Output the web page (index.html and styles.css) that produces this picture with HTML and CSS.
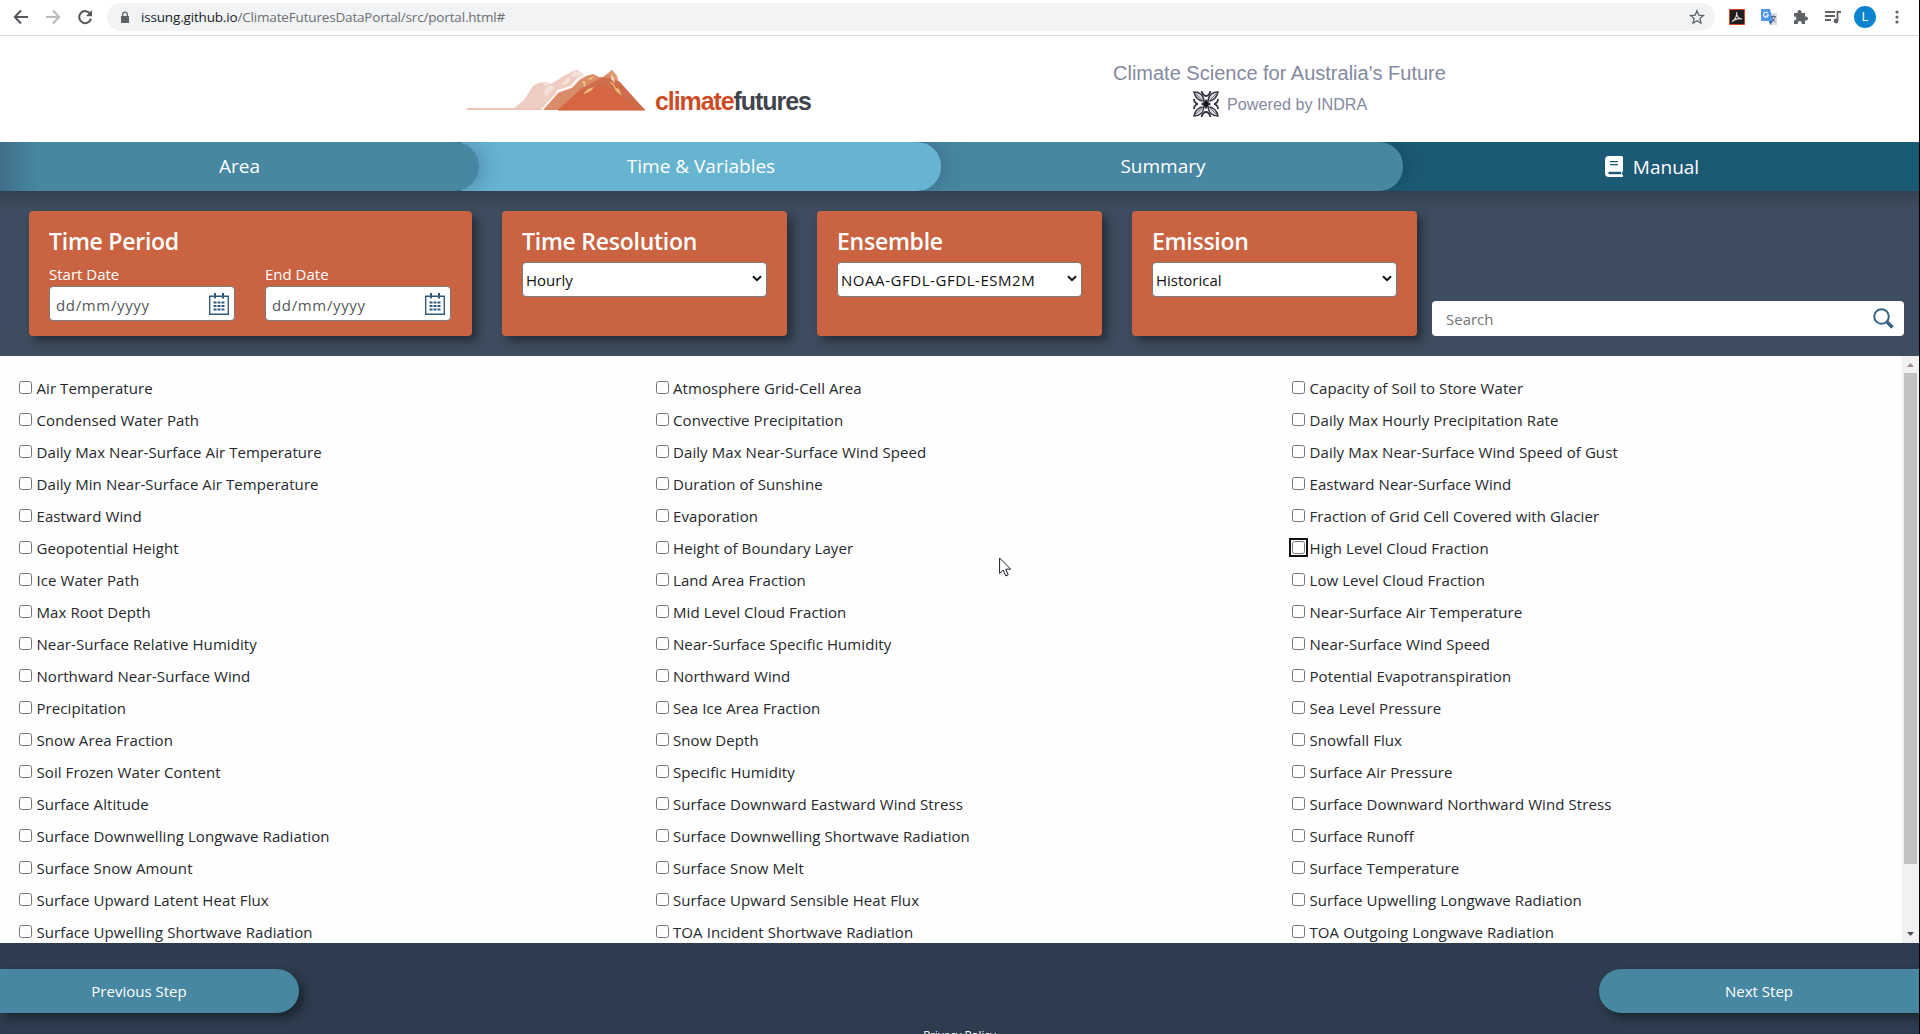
FILE: index.html
```html
<!DOCTYPE html>
<html lang="en">
<head>
<meta charset="utf-8">
<title>Climate Futures Data Portal</title>
<link rel="stylesheet" href="styles.css">
</head>
<body>
<div class="window">
  <div class="chrome">
    <div class="nav-icons">
      <svg width="16" height="16" viewBox="0 0 16 16" class="stroke"><path d="M15 8H2M8 1.500 1.800 8 8 14.500"/></svg>
      <svg width="16" height="16" viewBox="0 0 16 16" class="stroke faded"><path d="M1 8h13M8 1.500 14.200 8 8 14.500"/></svg>
      <svg width="16" height="16" viewBox="0 0 16 16" class="stroke"><path d="M13.300 5A6 6 0 1 0 14 9.500"/><path class="solid" d="M15 1v6.200H8.800z"/></svg>
    </div>
    <div class="address">
      <svg width="10" height="13" viewBox="0 0 10 13"><path d="M1 5h8v7H1z" fill="#5f6368"/><path d="M2.700 5V3.500a2.300 2.300 0 0 1 4.600 0V5" fill="none" stroke="#5f6368" stroke-width="1.300"/></svg>
      <span class="url"><b>issung.github.io</b>/ClimateFuturesDataPortal/src/portal.html#</span>
      <svg class="star" width="16" height="16" viewBox="0 0 16 16"><path d="m8 1.800 1.800 4.300 4.700.4-3.600 3.100 1.100 4.500L8 11.700l-4 2.400 1.100-4.500L1.500 6.500l4.700-.4z" fill="none" stroke="#5f6368" stroke-width="1.300"/></svg>
    </div>
    <div class="extensions">
      <svg width="16" height="16" viewBox="0 0 16 16"><path d="M.5.500h15v15H.5z" fill="#211c1e" stroke="#d5441f"/><path d="M3 12.500c3-1.500 5.500-6 4.700-9.500C7 7 10 10 13 10c-3-.8-7-.2-10 2.500z" fill="none" stroke="#eadfdf" stroke-width="1.100"/></svg>
      <svg width="16" height="16" viewBox="0 0 16 16"><path d="M6 4h10v12H9z" fill="#dcdcdc"/><path d="M0 0h9l3 12H1a1 1 0 0 1-1-1z" fill="#4f97ea"/><path d="m8 12 4 0-3 4z" fill="#2f62b5"/><path d="M6.800 4.200A2.400 2.400 0 1 0 7.300 6H5.200" fill="none" stroke="#fff" stroke-width="1.100"/><path d="M10 7.500h5M12.500 6.500v1M11 8c.5 2 2 4 3.500 5M14 8c-.5 2-2 4-3 5" fill="none" stroke="#56657c"/></svg>
      <svg width="16" height="16" viewBox="0 0 16 16"><path d="M1 4h3.500V3a2 2 0 0 1 4 0v1H12v3.500h1a2 2 0 0 1 0 4h-1V15H8.700v-1a1.900 1.900 0 0 0-3.800 0v1H1v-3.800h1a1.900 1.900 0 0 0 0-3.700H1z" fill="#5f6368"/></svg>
      <svg width="16" height="16" viewBox="0 0 16 16"><path d="M0 3h10M0 7h10M0 11h6M12.500 12V3H16" fill="none" stroke="#5f6368" stroke-width="1.800"/><circle cx="11" cy="12" r="2.400" fill="#5f6368"/></svg>
      <span class="avatar">L</span>
      <svg width="4" height="16" viewBox="0 0 4 16" fill="#5f6368"><circle cx="2" cy="3" r="1.600"/><circle cx="2" cy="8" r="1.600"/><circle cx="2" cy="13" r="1.600"/></svg>
    </div>
  </div>

  <header class="header">
    <div class="brand">
      <svg width="179" height="41" viewBox="0 0 179 41">
        <path d="M0 38h47l10-8 9-14 5-3 7-1 6 2 11-7 11-6 4-1 6 4 1 6-12 14-28 15H0z" fill="#efcdc3"/>
        <path d="M0 39.200h76" stroke="#f0c2b2" stroke-width="1.500"/>
        <path d="m103 5 5-4 6 2 1 2-8 2zM77 21l5-6 5 2-2 4-7 6zM95 13l6-5 3 1-3 4-5 2zM76 13l5-1 2 2-5 2z" fill="#f6e1d9"/>
        <path d="m75 40 9-10 5-5 2-4 13-4 7-8 5-3" stroke="#fffdf6" stroke-width="2" fill="none"/>
        <path d="m76 40 9-10 6-7 14-5 8-8 6-4 7-2 6 3 4 0 9-7 5 6 1 6 27 28z" fill="#da8c69"/>
        <path d="m91 40 24-22 17-9 6-2 14 4 26 29z" fill="#ce6d4b"/>
        <path d="m91 40 19-17 26-8 14 8 22 17z" fill="#d66641"/>
        <path d="m136 8 9-8 5 6 1 5-5-2-3-5z" fill="#de9b72"/>
        <path d="m115 11 3 0 1 5-2 1zM117 23l4-4 6-2-3 4-7 3zM120 9l7-3-3 4zM142 12l4 1 3 5 3 1 3 7-6-5-3-6z" fill="#edbb7d"/>
        <path d="m144 4 3 4 1 5-4-4z" fill="#f3d2bf"/>
        <path d="M91 40h87" stroke="#d75933" stroke-width="1"/>
      </svg>
      <div class="wordmark"><span>climate</span>futures</div>
    </div>
    <div class="tagline">
      <div class="slogan">Climate Science for Australia's Future</div>
      <div class="powered">
        <svg width="26" height="26" viewBox="0 0 26 26">
          <defs><g id="petal"><path d="M1 1q9 0 10 9Q3 10 1 1z" fill="#dedae1" stroke="#3b3945" stroke-width="1.500"/><path d="m3 3 7 7" stroke="#77727f" stroke-width="1"/><path d="M8.500 0Q10 5 13 5M1 8q0 4 4 5" stroke="#35323e" stroke-width="1.800" fill="none"/></g></defs>
          <use href="#petal"/><use href="#petal" transform="matrix(-1 0 0 1 26 0)"/><use href="#petal" transform="matrix(1 0 0 -1 0 26)"/><use href="#petal" transform="rotate(180 13 13)"/>
          <path d="M13 8.500v9M8.500 13h9" stroke="#3b3945" stroke-width="2.400"/><path d="M10.500 10.500h5v5h-5z" fill="#16151e"/>
        </svg>
        <span>Powered by INDRA</span>
      </div>
    </div>
  </header>

  <nav class="tabs">
    <a class="tab first">Area</a>
    <a class="tab active">Time &amp; Variables</a>
    <a class="tab third">Summary</a>
    <a class="manual">
      <svg width="18" height="21" viewBox="0 0 18 21"><path d="M4 0h12.500Q18 0 18 1.500v13q0 1-.8 1.400v3H18V21H4q-4 0-4-4V4q0-4 4-4z" fill="#fff"/><path d="M5 5.700h8M5 8.700h8" stroke="#1c5975" stroke-width="1.300"/><path d="M3.500 17h12.800" stroke="#1c5975" stroke-width="2.400"/></svg>
      Manual
    </a>
  </nav>

  <section class="filters">
    <div class="card period">
      <h2>Time Period</h2>
      <div class="dates">
        <div class="date"><span class="caption">Start Date</span>
          <div class="field"><span>dd/mm/yyyy</span><svg width="20" height="22" viewBox="0 0 20 22"><use href="#calendar"/></svg></div></div>
        <div class="date"><span class="caption">End Date</span>
          <div class="field"><span>dd/mm/yyyy</span><svg width="20" height="22" viewBox="0 0 20 22"><g id="calendar" fill="none" stroke="#325a7b"><path d="M.7 3.200h18.600v18.100H.7z" stroke-width="1.400"/><path d="M6 0v5.500M14 0v5.500" stroke-width="2"/><path d="M4.500 9.500h11M4.500 13h11M4.500 16.500h11" stroke-width="2" stroke-dasharray="3 1"/></g></svg></div></div>
      </div>
    </div>
    <div class="card"><h2>Time Resolution</h2><div class="select"><span>Hourly</span><svg width="10" height="7" viewBox="0 0 10 7"><path d="m1 1.200 4 4 4-4"/></svg></div></div>
    <div class="card"><h2>Ensemble</h2><div class="select"><span class="caps">NOAA-GFDL-GFDL-ESM2M</span><svg width="10" height="7" viewBox="0 0 10 7"><path d="m1 1.200 4 4 4-4"/></svg></div></div>
    <div class="card"><h2>Emission</h2><div class="select"><span>Historical</span><svg width="10" height="7" viewBox="0 0 10 7"><path d="m1 1.200 4 4 4-4"/></svg></div></div>
    <div class="search"><span>Search</span>
      <svg width="21" height="21" viewBox="0 0 21 21"><circle cx="8.500" cy="8.500" r="7.300" fill="none" stroke="#326183" stroke-width="2"/><path d="m14 14 5.500 5.500" stroke="#326183" stroke-width="3.400"/></svg>
    </div>
  </section>

  <main class="list">
    <div class="variables">
      <label><input type="checkbox">Air Temperature</label>
      <label><input type="checkbox">Atmosphere Grid-Cell Area</label>
      <label><input type="checkbox">Capacity of Soil to Store Water</label>
      <label><input type="checkbox">Condensed Water Path</label>
      <label><input type="checkbox">Convective Precipitation</label>
      <label><input type="checkbox">Daily Max Hourly Precipitation Rate</label>
      <label><input type="checkbox">Daily Max Near-Surface Air Temperature</label>
      <label><input type="checkbox">Daily Max Near-Surface Wind Speed</label>
      <label><input type="checkbox">Daily Max Near-Surface Wind Speed of Gust</label>
      <label><input type="checkbox">Daily Min Near-Surface Air Temperature</label>
      <label><input type="checkbox">Duration of Sunshine</label>
      <label><input type="checkbox">Eastward Near-Surface Wind</label>
      <label><input type="checkbox">Eastward Wind</label>
      <label><input type="checkbox">Evaporation</label>
      <label><input type="checkbox">Fraction of Grid Cell Covered with Glacier</label>
      <label><input type="checkbox">Geopotential Height</label>
      <label><input type="checkbox">Height of Boundary Layer</label>
      <label><input type="checkbox" class="focused">High Level Cloud Fraction</label>
      <label><input type="checkbox">Ice Water Path</label>
      <label><input type="checkbox">Land Area Fraction</label>
      <label><input type="checkbox">Low Level Cloud Fraction</label>
      <label><input type="checkbox">Max Root Depth</label>
      <label><input type="checkbox">Mid Level Cloud Fraction</label>
      <label><input type="checkbox">Near-Surface Air Temperature</label>
      <label><input type="checkbox">Near-Surface Relative Humidity</label>
      <label><input type="checkbox">Near-Surface Specific Humidity</label>
      <label><input type="checkbox">Near-Surface Wind Speed</label>
      <label><input type="checkbox">Northward Near-Surface Wind</label>
      <label><input type="checkbox">Northward Wind</label>
      <label><input type="checkbox">Potential Evapotranspiration</label>
      <label><input type="checkbox">Precipitation</label>
      <label><input type="checkbox">Sea Ice Area Fraction</label>
      <label><input type="checkbox">Sea Level Pressure</label>
      <label><input type="checkbox">Snow Area Fraction</label>
      <label><input type="checkbox">Snow Depth</label>
      <label><input type="checkbox">Snowfall Flux</label>
      <label><input type="checkbox">Soil Frozen Water Content</label>
      <label><input type="checkbox">Specific Humidity</label>
      <label><input type="checkbox">Surface Air Pressure</label>
      <label><input type="checkbox">Surface Altitude</label>
      <label><input type="checkbox">Surface Downward Eastward Wind Stress</label>
      <label><input type="checkbox">Surface Downward Northward Wind Stress</label>
      <label><input type="checkbox">Surface Downwelling Longwave Radiation</label>
      <label><input type="checkbox">Surface Downwelling Shortwave Radiation</label>
      <label><input type="checkbox">Surface Runoff</label>
      <label><input type="checkbox">Surface Snow Amount</label>
      <label><input type="checkbox">Surface Snow Melt</label>
      <label><input type="checkbox">Surface Temperature</label>
      <label><input type="checkbox">Surface Upward Latent Heat Flux</label>
      <label><input type="checkbox">Surface Upward Sensible Heat Flux</label>
      <label><input type="checkbox">Surface Upwelling Longwave Radiation</label>
      <label><input type="checkbox">Surface Upwelling Shortwave Radiation</label>
      <label><input type="checkbox">TOA Incident Shortwave Radiation</label>
      <label><input type="checkbox">TOA Outgoing Longwave Radiation</label>
    </div>
    <div class="scrollbar">
      <svg width="17" height="17" viewBox="0 0 17 17"><path d="M5 11h7L8.500 7z" fill="#a08a90"/></svg>
      <div class="thumb"></div>
      <svg width="17" height="17" viewBox="0 0 17 17"><path d="M5 6h7l-3.500 4z" fill="#494f5c"/></svg>
    </div>
  </main>

  <footer class="footer">
    <div class="steps"><a class="step prev">Previous Step</a><a class="step next">Next Step</a></div>
    <a class="privacy">Privacy Policy</a>
  </footer>
</div>
<svg class="cursor" width="13" height="20" viewBox="0 0 13 20"><path d="M.6 1v15.500l3.600-3.400 2.500 5.800 2.500-1-2.500-5.700h5z" fill="#fff" stroke="#1c1c28" stroke-width="1"/></svg>
</body>
</html>
```

FILE: styles.css
```css
* { box-sizing: border-box; }
body {
  margin: 0;
  background: #000;
  font: 15px/20px "Open Sans", "Noto Sans", sans-serif;
  color: #25282c;
}
svg { display: block; flex: none; }
.window {
  width: 1919px;
  height: 1034px;
  display: flex;
  flex-direction: column;
  overflow: hidden;
  background: #fff;
}

/* browser toolbar */
.chrome {
  height: 36px;
  flex: none;
  display: flex;
  border-bottom: 1px solid #dadce0;
  padding-top: 3px;
}
.nav-icons { display: flex; gap: 16px; width: 107px; height: 28px; align-items: center; padding-left: 13px; }
.stroke path { fill: none; stroke: #55585d; stroke-width: 2; }
.stroke .solid { fill: #55585d; stroke: none; }
.faded path { stroke: #b9babd; }
.address {
  width: 1608px;
  height: 28px;
  display: flex;
  align-items: center;
  background: #f1f3f4;
  border-radius: 14px;
  padding: 0 10px 0 13px;
  color: #6b6f73;
}
.url { margin-left: 11px; flex: 1; font-size: 13.500px; letter-spacing: -.17px; }
.url b { font-weight: 400; color: #202124; }
.extensions { display: flex; height: 28px; align-items: center; gap: 16px; padding-left: 14px; }
.avatar {
  width: 22px; height: 22px; border-radius: 50%;
  margin: 0 3px 0 -3px;
  background: #0a84cf; color: #fff;
  font: 12px/22px Roboto, sans-serif; text-align: center;
}

/* page header */
.header { height: 106px; flex: none; display: flex; padding: 24px 0 0 467px; }
.brand { display: flex; align-items: flex-start; padding-top: 10px; width: 646px; }
.wordmark {
  margin-left: 9px; padding-top: 18px;
  font: bold 25px/26px "Liberation Sans", sans-serif;
  letter-spacing: -1.080px; color: #40444d;
}
.wordmark span { color: #cd4c26; }
.tagline {
  font: 20px/26px "Liberation Sans", sans-serif;
  color: #8489a0; width: 333px; white-space: nowrap;
}
.powered { display: flex; align-items: center; gap: 8px; padding: 5px 0 0 80px; font-size: 16.200px; }

/* step tabs */
.tabs { height: 49px; flex: none; display: flex; background: #1c5975; color: #fff; font-size: 19px; line-height: 48px; text-align: center; }
.tab {
  width: 480px; margin-left: -18px; position: relative; z-index: 1;
  border-radius: 0 24px 24px 0; background: #4787a1;
  box-shadow: 4px 0 20px rgba(58, 76, 120, .4);
  clip-path: inset(0 -40px 0 0);
}
.first { width: 479px; margin-left: 0; z-index: 3; background: linear-gradient(90deg, #426d8b 0, #447994 16px, #4787a1 38px); }
.active { z-index: 2; background: #66b4d0; }
.third { box-shadow: 4px 0 16px rgba(15, 60, 85, .4); }
.manual { flex: 1; margin-left: -18px; display: flex; justify-content: center; align-items: center; gap: 10px; }

/* filter cards */
.filters {
  height: 165px; flex: none; display: flex; gap: 30px; padding: 20px 15px 20px 29px;
  background: linear-gradient(#33404f, #3d4c5e 18px);
}
.card {
  width: 285px; padding: 14px 20px; border-radius: 4px;
  background: #c96342; color: #fff;
  box-shadow: 5px 5px 10px rgba(0, 0, 0, .4);
}
.period { width: 443px; }
h2 { margin: 0; font-size: 23px; line-height: 32px; font-weight: 600; letter-spacing: -.25px; white-space: nowrap; }
.dates { display: flex; gap: 30px; padding-top: 7px; }
.date { width: 186px; }
.caption { display: block; line-height: 21px; margin-bottom: 1px; }
.field, .select {
  height: 35px; display: flex; align-items: center; justify-content: space-between;
  background: #fff; border: 1px solid #767b80; border-radius: 4px;
}
.field { padding: 2px 5px 0 6px; color: #55595e; letter-spacing: .65px; }
.field svg { margin-bottom: 2px; }
.select { margin-top: 5px; padding: 0 4px 0 3px; color: #111; }
.caps { letter-spacing: .55px; }
.select svg { margin-bottom: 2px; }
.select path { fill: none; stroke: #111; stroke-width: 2; }
.search {
  flex: 1; height: 35px; align-self: flex-end; margin-left: -15px;
  display: flex; align-items: center; justify-content: space-between;
  padding: 0 10px 0 14px; background: #fff; border-radius: 4px; color: #737679;
}

/* variable list */
.list { height: 587px; flex: none; display: flex; background: #fefefe; overflow: hidden; }
.variables {
  width: 1902px; padding: 16px 0 0 19px;
  display: grid; grid-template-columns: 636.500px 636.500px 1fr; grid-auto-rows: 32px;
}
.variables label { display: flex; align-items: center; white-space: nowrap; letter-spacing: .08px; }
.variables input { width: 13px; height: 13px; margin: 0 4.500px 1px 0; }
.variables .focused { outline: 2px solid #101010; outline-offset: 1px; border-radius: 3px; }
.scrollbar { width: 17px; background: #f1f1f1; display: flex; flex-direction: column; }
.thumb { height: 491px; margin: 0 2px 62px; background: #c1c1c1; }

/* footer */
.footer { flex: 1; background: #2d3c4e; color: #fff; padding-top: 26px; text-align: center; }
.steps { display: flex; justify-content: space-between; height: 58px; }
.step { height: 44px; line-height: 44px; background: #4787a1; box-shadow: 5px 5px 10px rgba(0, 0, 0, .4); }
.prev { width: 299px; padding-right: 21px; border-radius: 0 22px 22px 0; }
.next { width: 320px; border-radius: 22px 0 0 22px; }
.privacy { display: block; font-size: 11.600px; line-height: 16px; }
.cursor { position: absolute; left: 999px; top: 557px; }
```
